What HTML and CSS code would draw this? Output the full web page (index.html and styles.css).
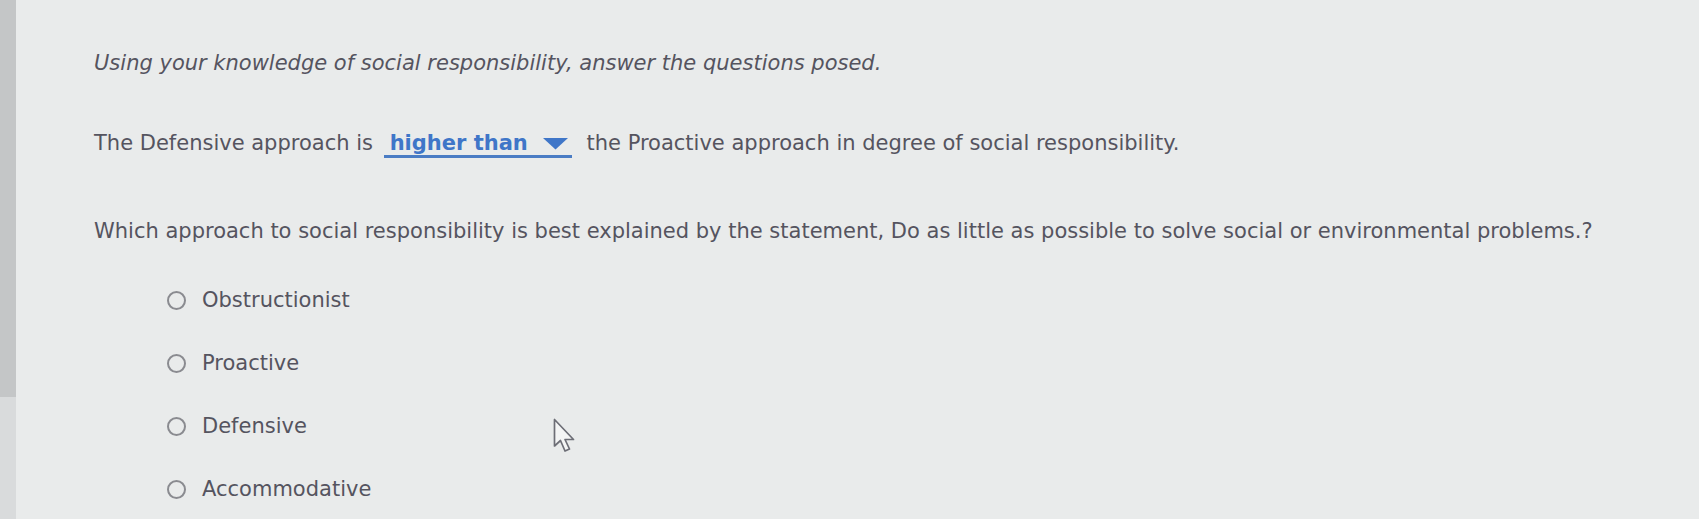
FILE: index.html
```html
<!DOCTYPE html>
<html>
<head>
<meta charset="utf-8">
<link rel="stylesheet" href="styles.css">
</head>
<body>
<div class="page">
  <div class="sidebar"><div class="bar"></div><div class="bar-low"></div></div>
  <main class="content">
    <p class="intro">Using your knowledge of social responsibility, answer the questions posed.</p>
    <p class="q q1">The Defensive approach is <span class="select"><span class="sel-text">higher than</span><svg class="caret" width="25" height="12" viewBox="0 0 25 12"><polygon points="0,0 25,0 12.5,11.5" fill="#3f76c8"/></svg></span> the Proactive approach in degree of social responsibility.</p>
    <p class="q q2">Which approach to social responsibility is best explained by the statement, Do as little as possible to solve social or environmental problems.?</p>
    <ul class="options">
      <li class="opt"><span class="radio"></span><span>Obstructionist</span></li>
      <li class="opt"><span class="radio"></span><span>Proactive</span></li>
      <li class="opt"><span class="radio"></span><span>Defensive</span><svg class="cursor" width="24" height="38" viewBox="0 0 24 38"><path d="M1.5 1.5 L1.5 28 L7.5 22.5 L12 33 L16.5 31 L12 21.5 L20.5 21.5 Z" fill="#f4f5f5" stroke="#6d6e76" stroke-width="1.7" stroke-linejoin="round"/></svg></li>
      <li class="opt"><span class="radio"></span><span>Accommodative</span></li>
    </ul>
  </main>
</div>
</body>
</html>
```
FILE: styles.css
```css
html, body {
  margin: 0;
  padding: 0;
}
body {
  background: #e9ebeb;
  width: 1699px;
  height: 519px;
  overflow: hidden;
  font-family: "DejaVu Sans", Verdana, sans-serif;
  color: #55545f;
}
.page {
  display: flex;
  height: 519px;
}
.sidebar {
  width: 16px;
  display: flex;
  flex-direction: column;
}
.bar {
  height: 397px;
  background: #c4c6c7;
}
.bar-low {
  flex: 1;
  background: #d9dbdc;
}
.content {
  padding: 49px 0 0 78px;
  font-size: 21px;
}
p {
  margin: 0;
  line-height: 28px;
}
.intro {
  font-style: italic;
}
.q1 {
  margin-top: 52px;
}
.q2 {
  margin-top: 59px;
}
.select {
  display: inline-flex;
  align-items: center;
  gap: 15px;
  border-bottom: 3px solid #4a7cc4;
  padding: 0 4px 0 6px;
  margin: 0 8px 0 4px;
  color: #3f76c8;
  font-weight: bold;
  line-height: 24px;
}
.caret {
  margin-top: 2px;
}
.options {
  list-style: none;
  margin: 0;
  padding: 0 0 0 73px;
}
.opt {
  display: flex;
  align-items: center;
  height: 28px;
  margin-top: 35px;
  position: relative;
}
.opt:first-child {
  margin-top: 41px;
}
.radio {
  width: 19px;
  height: 19px;
  border: 2px solid #8a8b90;
  border-radius: 50%;
  box-sizing: border-box;
  margin-right: 16px;
}
.cursor {
  position: absolute;
  left: 386px;
  top: 6px;
}
```
